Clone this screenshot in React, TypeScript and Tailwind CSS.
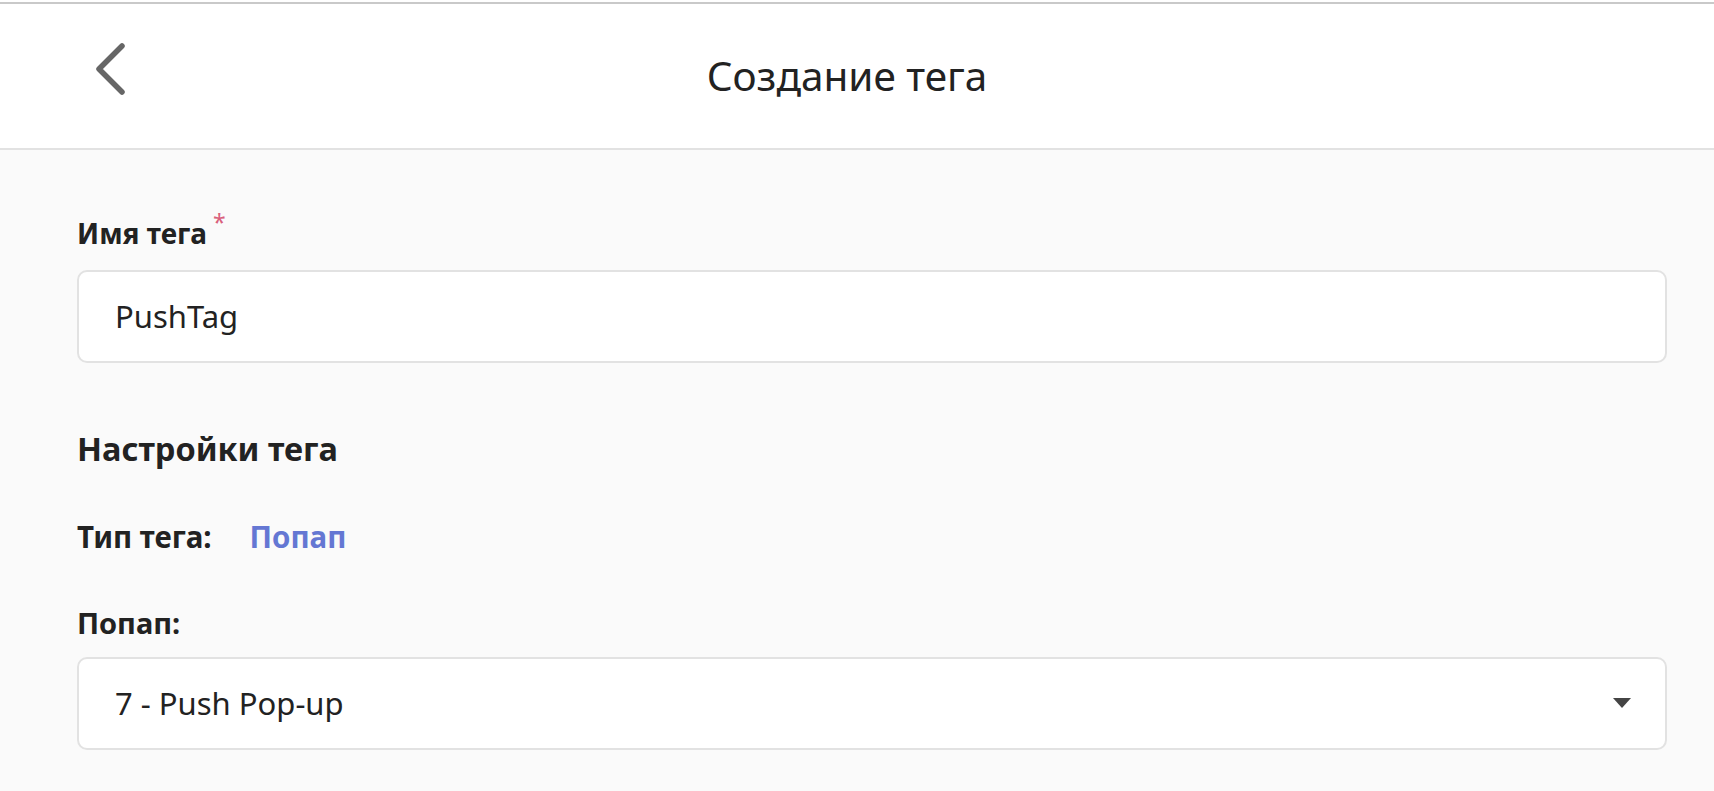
import React from 'react';

const font = { fontFamily: '"Noto Sans", "Open Sans", sans-serif' };

const Field = ({ children }: { children: React.ReactNode }) => (
  <div className="flex h-[93px] items-center rounded-[10px] border-2 border-[#e2e2e2] bg-white pl-[36px] pr-[34px] text-[31px] text-[#222]">
    {children}
  </div>
);

const App = () => {
  return (
    <div className="min-h-screen bg-[#fafafa]" style={font}>
      {/* Top bar */}
      <div className="bg-white pt-[2px]">
        <div className="grid h-[148px] grid-cols-[1fr_auto_1fr] items-center border-t-2 border-b-2 border-t-[#c9c9c9] border-b-[#e2e2e2] pr-[20px]">
          <div className="pl-[94px] pb-[14px]">
            <svg width="32" height="54" viewBox="0 0 32 54" fill="none">
              <path d="M28 4 L5 27 L28 50" stroke="#666" strokeWidth="5.5" strokeLinecap="round" strokeLinejoin="round" />
            </svg>
          </div>
          <h1 className="text-[40.5px] font-normal text-[#222]">Создание тега</h1>
          <div />
        </div>
      </div>

      {/* Form */}
      <div className="flex flex-col pl-[77px] pr-[47px] pt-[62px]">
        <label className="flex items-start text-[28px] font-bold text-[#222]">
          Имя тега
          <span className="ml-[6px] text-[23px] font-normal leading-[20px] text-[#d9607c]">*</span>
        </label>
        <div className="mt-[16px]">
          <Field>PushTag</Field>
        </div>

        <h2 className="mt-[62px] text-[32.5px] font-bold text-[#222]">Настройки тега</h2>

        <div className="mt-[41px] flex items-center gap-[38px] text-[29.5px] font-bold">
          <span className="text-[#222]">Тип тега:</span>
          <span className="text-[#6477d3]">Попап</span>
        </div>

        <label className="mt-[42px] text-[29px] font-bold text-[#222]">Попап:</label>
        <div className="mt-[12px]">
          <Field>
            <span className="flex-1">7 - Push Pop-up</span>
            <svg width="18" height="10" viewBox="0 0 18 10">
              <path d="M0 0 H18 L9 10 Z" fill="#444" />
            </svg>
          </Field>
        </div>
      </div>
    </div>
  );
};

export default App;
